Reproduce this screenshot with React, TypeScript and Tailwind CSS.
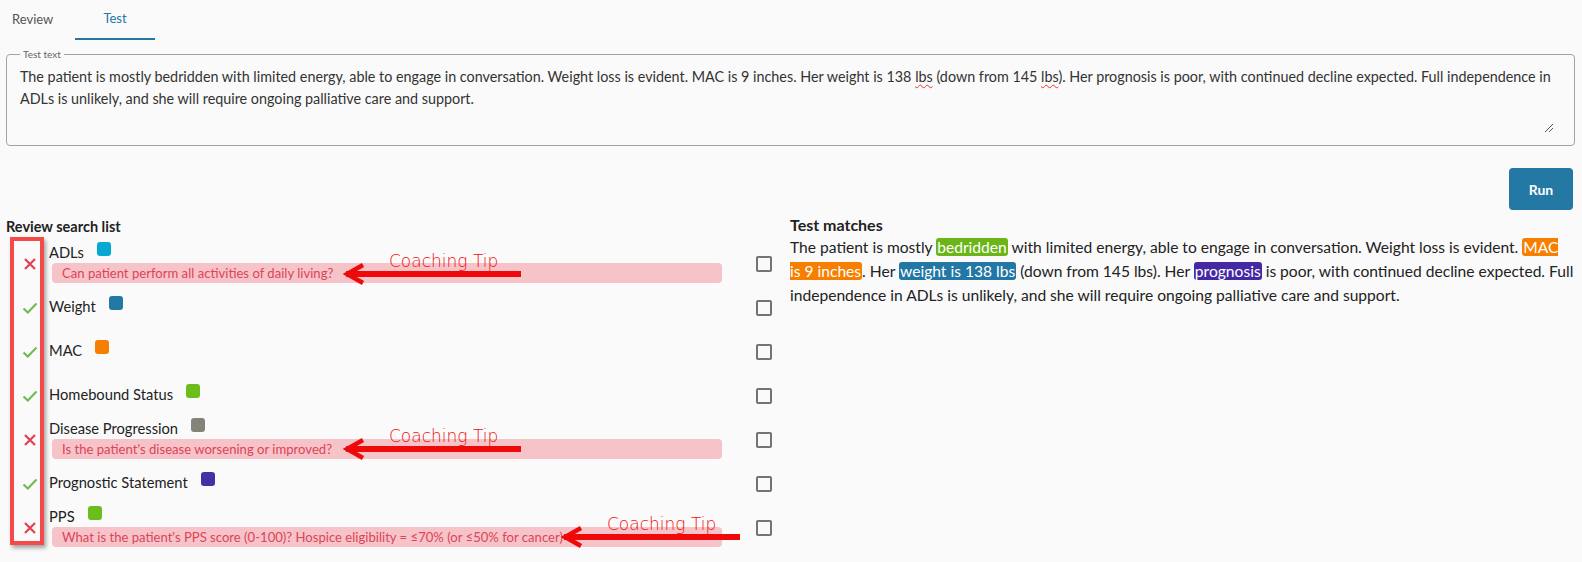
import React from "react";

type Item = {
  label: string;
  color: string;
  ok: boolean;
  tip?: string;
};

const ITEMS: Item[] = [
  { label: "ADLs", color: "bg-[#07a9d3]", ok: false, tip: "Can patient perform all activities of daily living?" },
  { label: "Weight", color: "bg-[#2379a5]", ok: true },
  { label: "MAC", color: "bg-[#f77f00]", ok: true },
  { label: "Homebound Status", color: "bg-[#6bbd1b]", ok: true },
  { label: "Disease Progression", color: "bg-[#85827a]", ok: false, tip: "Is the patient's disease worsening or improved?" },
  { label: "Prognostic Statement", color: "bg-[#4131a4]", ok: true },
  {
    label: "PPS",
    color: "bg-[#6bbd1b]",
    ok: false,
    tip: "What is the patient's PPS score (0-100)? Hospice eligibility = ≤70% (or ≤50% for cancer)",
  },
];

function CheckMark() {
  return (
    <svg width="16" height="14" viewBox="0 0 16 14" fill="none">
      <path d="M1.5 7.5 L5.8 11.5 L14.5 2.5" stroke="#6cba4e" strokeWidth="2" />
    </svg>
  );
}

function CrossMark() {
  return (
    <svg width="14" height="14" viewBox="0 0 14 14" fill="none">
      <path d="M2 2 L12 12 M12 2 L2 12" stroke="#e2404f" strokeWidth="2.2" />
    </svg>
  );
}

// hand-drawn annotation arrow pointing left
function Annotation({ x, y, w, textX }: { x: number; y: number; w: number; textX: number }) {
  return (
    <div className="absolute pointer-events-none" style={{ left: x, top: y - 20, width: w, height: 32 }}>
      <span
        className="absolute text-[17px] leading-none text-[#ee1111] font-['DejaVu_Sans',sans-serif] font-extralight"
        style={{ left: textX, top: 0 }}
      >
        Coaching Tip
      </span>
      <svg className="absolute left-0 top-[10px]" width={w} height="22" viewBox={`0 0 ${w} 22`} fill="none">
        <path d={`M3 11 H${w}`} stroke="#ee0a0a" strokeWidth="6" />
        <path d="M20 2 L4 11 L20 20" stroke="#ee0a0a" strokeWidth="4.5" strokeLinejoin="miter" />
      </svg>
    </div>
  );
}

export default function App() {
  return (
    <div className="relative min-h-screen bg-[#fafafa] text-[#333] font-['Lato','Noto_Sans',sans-serif]">
      {/* tabs */}
      <div className="flex h-10 text-[13px]">
        <button className="w-[75px] pl-3 text-left text-[#555]">Review</button>
        <button className="w-[80px] text-center text-[#2479a4] border-b-2 border-[#2479a4]">Test</button>
      </div>

      <div className="pl-[6px] pr-[7px]">
        <fieldset className="mt-[8px] h-[98px] border border-[#a3a3a3] rounded-[4px] px-[13px] relative">
          <legend className="px-[3px] text-[10px] leading-[12px] text-[#666]">Test text</legend>
          <div className="pt-[6px] text-[14.35px] leading-[22px] text-[#333]">
            The patient is mostly bedridden with limited energy, able to engage in conversation. Weight loss is evident. MAC
            is 9 inches. Her weight is 138{" "}
            <span className="underline decoration-wavy decoration-[#e33] decoration-1 underline-offset-2">lbs</span> (down
            from 145 <span className="underline decoration-wavy decoration-[#e33] decoration-1 underline-offset-2">lbs</span>).
            Her prognosis is poor, with continued decline expected. Full independence in ADLs is unlikely, and she will
            require ongoing palliative care and support.
          </div>
          <svg className="absolute right-[20px] bottom-[12px]" width="10" height="10" viewBox="0 0 10 10">
            <path d="M1 9 L9 1 M5 9 L9 5" stroke="#555" strokeWidth="1" />
          </svg>
        </fieldset>

        <div className="flex justify-end mt-[22px] pr-[2px]">
          <button className="w-[64px] h-[42px] rounded-[4px] bg-[#2479a4] text-white text-[14px] font-bold">Run</button>
        </div>

        <div className="flex mt-[5px]">
          {/* left column */}
          <div className="w-[784px] shrink-0">
            <div className="pt-[2px] text-[14.5px] leading-5 font-bold text-[#222]">Review search list</div>
            <div className="mt-[5px]">
              {ITEMS.map((it) => (
                <div key={it.label} className="flex items-center h-[44px]">
                  <div className="w-[43px] flex justify-center pl-[5px]">{it.ok ? <CheckMark /> : <CrossMark />}</div>
                  <div className="relative -top-[2px] w-[673px] flex flex-col">
                    <div className="flex h-5 items-center">
                      <span className="text-[14.7px] leading-5 text-[#222]">{it.label}</span>
                      <span className={`ml-[13px] w-[14px] h-[14px] rounded-[3px] -mt-[6px] ${it.color}`} />
                    </div>
                    {it.tip && (
                      <div className="h-5 mt-[1px] ml-[3px] rounded-[4px] bg-[#f6c3c8] pl-[10px] text-[13.1px] leading-5 text-[#dd4458]">
                        {it.tip}
                      </div>
                    )}
                  </div>
                  <div className="ml-[34px] w-4 h-4 border-2 border-[#737373] rounded-[2px]" />
                </div>
              ))}
            </div>
          </div>

          {/* right column */}
          <div className="flex-1">
            <div className="text-[16px] leading-5 font-bold text-[#222]">Test matches</div>
            <p className="text-[15.6px] leading-6 text-[#222]">
              The patient is mostly <span className="bg-[#6ab517] text-white rounded-[3px] px-px">bedridden</span> with
              limited energy, able to engage in conversation. Weight loss is evident.{" "}
              <span className="bg-[#f77f00] text-white rounded-[3px] px-px">
                MAC
                <br />
                is 9 inches
              </span>
              . Her <span className="bg-[#2377a4] text-white rounded-[3px] px-px">weight is 138 lbs</span> (down from 145
              lbs). Her <span className="bg-[#4528a4] text-white rounded-[3px] px-px">prognosis</span> is poor, with
              continued decline expected. Full independence in ADLs is unlikely, and she will require ongoing palliative
              care and support.
            </p>
          </div>
        </div>
      </div>

      {/* annotations */}
      <div className="absolute left-[10px] top-[237px] w-[34px] h-[308px] border-4 border-[#f44a4a] shadow-[2px_3px_4px_rgba(0,0,0,0.35)] pointer-events-none" />
      <Annotation x={343} y={273} w={178} textX={46} />
      <Annotation x={343} y={448} w={178} textX={46} />
      <Annotation x={561} y={536} w={179} textX={46} />
    </div>
  );
}
